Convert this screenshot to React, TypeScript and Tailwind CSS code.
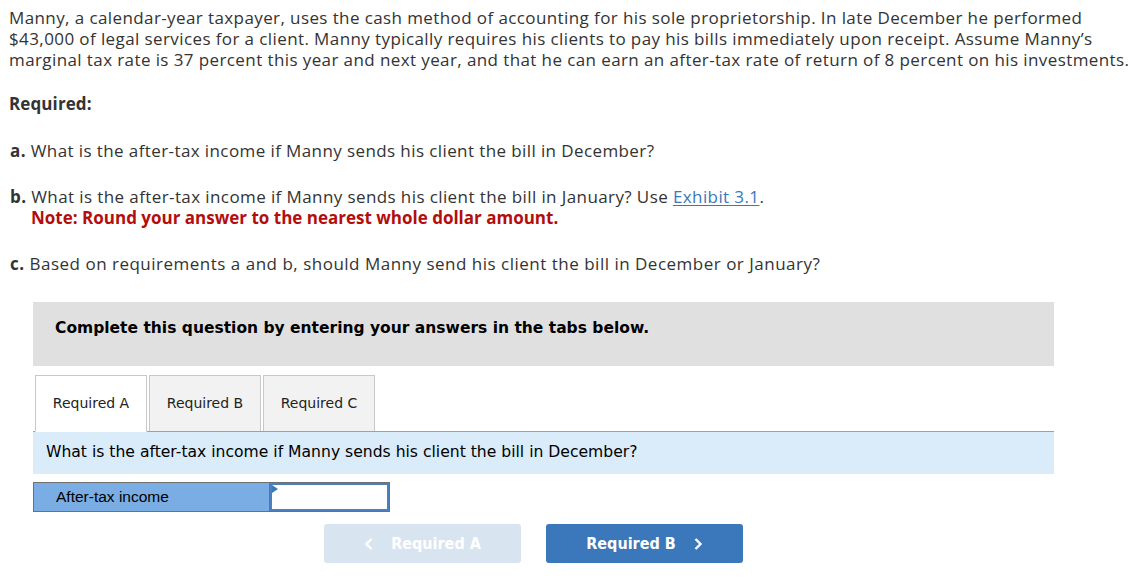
import React, { useState } from "react";

const body = "font-['Open_Sans','Liberation_Sans',sans-serif]";
const tahoma = "font-['DejaVu_Sans',Tahoma,sans-serif]";
const btnFont = "font-['DejaVu_Sans_Condensed','DejaVu_Sans',sans-serif]";

const tabs = ["Required A", "Required B", "Required C"];

const Chevron = ({ dir }: { dir: "left" | "right" }) => (
	<svg width="10" height="14" viewBox="0 0 10 14" fill="none">
		<path
			d={dir === "left" ? "M7.5 2 L2.5 7 L7.5 12" : "M2.5 2 L7.5 7 L2.5 12"}
			stroke="currentColor"
			strokeWidth="2.4"
		/>
	</svg>
);

const App = () => {
	const [active, setActive] = useState(0);
	const [value, setValue] = useState("");

	return (
		<div className="w-[1140px] h-[581px] bg-white text-[#333] overflow-hidden">
			{/* problem text */}
			<div className={`${body} text-[17px] leading-[21px] tracking-[0.4px] pl-[9px] pt-[7px]`}>
				<p className="whitespace-nowrap">
					Manny, a calendar-year taxpayer, uses the cash method of accounting for his sole proprietorship. In late December he performed
					<br />
					$43,000 of legal services for a client. Manny typically requires his clients to pay his bills immediately upon receipt. Assume Manny’s
					<br />
					marginal tax rate is 37 percent this year and next year, and that he can earn an after-tax rate of return of 8 percent on his investments.
				</p>
				<p className="font-bold mt-[23px] tracking-[0.1px]">Required:</p>
				<div className="pl-[1px]">
					<p className="mt-[26px]">
						<b>a.</b> What is the after-tax income if Manny sends his client the bill in December?
					</p>
					<p className="mt-[25px]">
						<b>b.</b> What is the after-tax income if Manny sends his client the bill in January? Use{" "}
						<a href="#" className="text-[#3a77bb] underline underline-offset-2">
							Exhibit 3.1
						</a>
						.
					</p>
					<p className="pl-[21px] text-[#b30d0d] font-bold tracking-[0px]">
						Note: Round your answer to the nearest whole dollar amount.
					</p>
					<p className="mt-[25px] tracking-[0.5px]">
						<b>c.</b> Based on requirements a and b, should Manny send his client the bill in December or January?
					</p>
				</div>
			</div>

			{/* answer widget */}
			<div className="ml-[33px] w-[1021px] mt-[28px]">
				<div className="bg-[#e0e0e0] h-[64px] flex items-center pl-[22px] pb-[10px]">
					<span className="font-['DejaVu_Sans',Verdana,sans-serif] font-bold text-[15.5px] text-black">
						Complete this question by entering your answers in the tabs below.
					</span>
				</div>

				<div className="flex items-end mt-[9px] pl-[2px] gap-[2px] border-b border-[#a0a0a0]">
					{tabs.map((t, i) => (
						<button
							key={t}
							onClick={() => setActive(i)}
							className={`${tahoma} text-[14px] text-[#222] w-[112px] h-[56px] border border-[#c8c8c8] ${
								i === active
									? "bg-white border-[#a0a0a0] border-b-white -mb-px h-[57px]"
									: "bg-[#f2f2f2] border-b-0"
							}`}
						>
							{t}
						</button>
					))}
				</div>

				<div className="bg-[#daebf9] h-[42px] flex items-center pl-[13px]">
					<span className={`${tahoma} text-[15.6px] text-black`}>
						What is the after-tax income if Manny sends his client the bill in December?
					</span>
				</div>

				<div className="flex mt-[8px] h-[30px] w-[357px] border border-[#707070]">
					<div className="w-[236px] bg-[#7aade4] border-r border-[#707070] flex items-center pl-[22px]">
						<span className="font-['Liberation_Sans',Arial,sans-serif] text-[15.5px] text-black">After-tax income</span>
					</div>
					<div className="relative flex-1 border-2 border-[#4a7fc0]">
						<span className="absolute left-0 top-0 w-0 h-0 border-y-[4px] border-y-transparent border-l-[6px] border-l-[#3a77bb]" />
						<input
							value={value}
							onChange={(e) => setValue(e.target.value)}
							className="w-full h-full outline-none text-right px-1 text-[15px]"
						/>
					</div>
				</div>

				<div className="flex gap-[25px] mt-[12px] ml-[291px]">
					<button
						disabled
						className={`${btnFont} font-bold w-[197px] h-[39px] rounded-[3px] bg-[#d9e4f1] text-white text-[16px] flex items-center justify-center gap-[17px]`}
					>
						<Chevron dir="left" />
						<span>Required A</span>
					</button>
					<button
						onClick={() => setActive(1)}
						className={`${btnFont} font-bold w-[197px] h-[39px] rounded-[3px] bg-[#3a77bb] text-white text-[16px] flex items-center justify-center gap-[17px]`}
					>
						<span>Required B</span>
						<Chevron dir="right" />
					</button>
				</div>
			</div>
		</div>
	);
};

export default App;
